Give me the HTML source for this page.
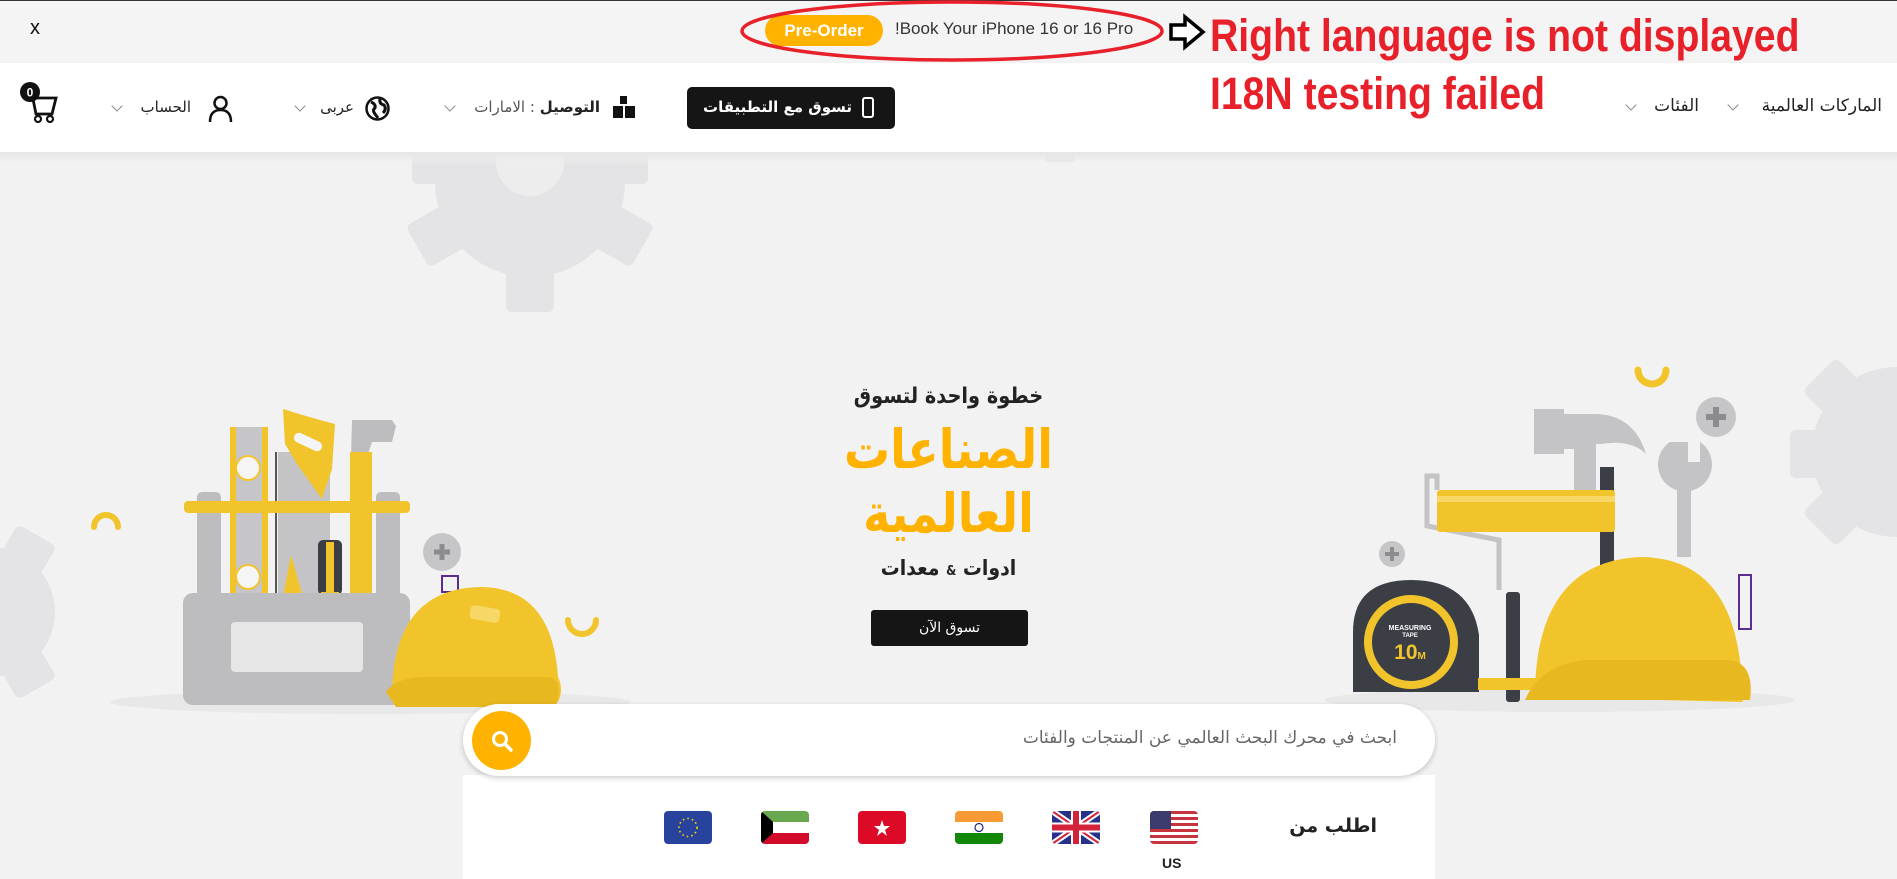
<!DOCTYPE html>
<html><head><meta charset="utf-8"><style>
*{margin:0;padding:0;box-sizing:border-box}
body{width:1897px;height:879px;overflow:hidden;background:#f2f2f2;font-family:"Liberation Sans","Noto Sans CJK SC",sans-serif;position:relative}
.a{position:absolute}
.ar{font-family:"DejaVu Sans","Noto Sans CJK SC",sans-serif;direction:rtl;white-space:nowrap}
.chev{position:absolute;width:8px;height:8px;border-right:1.5px solid #888;border-bottom:1.5px solid #888;transform:rotate(45deg)}
.flag{position:absolute;top:811px;width:48px;height:33px;border-radius:4px;overflow:hidden}
.c{left:0;width:1897px;text-align:center}
</style></head><body>
<div class="a" style="left:0;top:0;width:1897px;height:1px;background:#333"></div>
<div class="a" style="left:0;top:1px;width:1897px;height:62px;background:#f4f4f4"></div>
<div class="a" style="left:30px;top:17px;font-size:20px;color:#111">x</div>
<div class="a" style="left:765px;top:15px;width:118px;height:31px;border-radius:16px;background:#ffb300;color:#fff;font-weight:bold;font-size:17px;text-align:center;line-height:31px">Pre-Order</div>
<div class="a" style="left:895px;top:19px;font-size:17px;color:#333">!Book Your iPhone 16 or 16 Pro</div>
<svg class="a" style="left:0;top:0" width="1897" height="160">
<ellipse cx="952" cy="31" rx="210" ry="29" fill="none" stroke="#e8202a" stroke-width="3.5"/>
<path d="M1171 25 h14 v-8 l18 15 l-18 15 v-8 h-14 z" fill="#fff" stroke="#000" stroke-width="3.5"/>
</svg>
<div class="a" style="left:1210px;top:10px;font-size:45px;font-weight:bold;color:#e8202a;transform:scaleX(0.87);transform-origin:0 0;white-space:nowrap">Right language is not displayed</div>
<div class="a" style="left:0;top:63px;width:1897px;height:89px;background:#fff;box-shadow:0 3px 6px rgba(0,0,0,.08)"></div>
<div class="a" style="left:1210px;top:68px;font-size:45px;font-weight:bold;color:#e8202a;transform:scaleX(0.87);transform-origin:0 0;white-space:nowrap">I18N testing failed</div>
<!-- nav right -->
<div class="a ar" style="right:15px;top:96px;font-size:17px;color:#222">الماركات العالمية</div>
<div class="chev" style="left:1729px;top:101px"></div>
<div class="a ar" style="right:198px;top:96px;font-size:17px;color:#222">الفئات</div>
<div class="chev" style="left:1627px;top:101px"></div>
<!-- app button -->
<div class="a" style="left:687px;top:87px;width:208px;height:42px;background:#151515;border-radius:5px"></div>
<div class="a ar" style="right:1045px;top:98px;font-size:15px;font-weight:bold;color:#fff">تسوق مع التطبيقات</div>
<div class="a" style="left:862px;top:97px;width:12px;height:21px;border:2.5px solid #fff;border-radius:3px"></div>
<!-- delivery -->
<svg class="a" style="left:612px;top:96px" width="24" height="24"><rect x="8" y="0" width="7" height="8" fill="#111"/><rect x="1" y="10" width="10" height="12" fill="#111"/><rect x="13" y="10" width="10" height="12" fill="#111"/></svg>
<div class="a ar" style="right:1297px;top:98px;font-size:15px;color:#555"><b style="color:#222">التوصيل</b> : الامارات</div>
<div class="chev" style="left:446px;top:102px"></div>
<svg class="a" style="left:365px;top:96px" width="25" height="25"><circle cx="12.5" cy="12.5" r="11" fill="none" stroke="#111" stroke-width="2.5"/><path d="M6 6 q5 2 4 6 q-3 2 0 6 l3 4 M15 3 q-1 5 4 6 q3 4 -1 8" fill="none" stroke="#111" stroke-width="3"/></svg>
<div class="a ar" style="right:1543px;top:98px;font-size:15px;color:#222">عربى</div>
<div class="chev" style="left:296px;top:102px"></div>
<svg class="a" style="left:208px;top:95px" width="25" height="28"><circle cx="12.5" cy="8" r="6" fill="none" stroke="#111" stroke-width="2.5"/><path d="M2 27 q0-12 10.5-12 q10.5 0 10.5 12" fill="none" stroke="#111" stroke-width="2.5"/></svg>
<div class="a ar" style="right:1706px;top:98px;font-size:15px;color:#222">الحساب</div>
<div class="chev" style="left:113px;top:102px"></div>
<svg class="a" style="left:14px;top:80px" width="46" height="44"><path d="M14 14 h4 l4 20 h16 l4 -16 h-20" fill="none" stroke="#111" stroke-width="2.8"/><circle cx="24" cy="39" r="3" fill="none" stroke="#111" stroke-width="2.2"/><circle cx="36" cy="39" r="3" fill="none" stroke="#111" stroke-width="2.2"/><circle cx="16" cy="12" r="10" fill="#111"/><text x="16" y="16.5" font-size="12" font-weight="bold" fill="#fff" text-anchor="middle" font-family="Liberation Sans">0</text></svg>

<!-- hero illustrations -->
<svg class="a" style="left:0;top:152px" width="1897" height="727">
<defs><linearGradient id="sh" x1="0" y1="0" x2="0" y2="1"><stop offset="0" stop-color="#e6e6e6"/><stop offset="1" stop-color="#f2f2f2" stop-opacity="0"/></linearGradient></defs>
<g fill="#e4e4e6">
<circle cx="530" cy="30" r="95"/>
<rect x="506" y="-110" width="48" height="270" rx="6"/>
<rect x="506" y="-110" width="48" height="270" rx="6" transform="rotate(60 530 30)"/>
<rect x="506" y="-110" width="48" height="270" rx="6" transform="rotate(-60 530 30)"/>
<rect x="412" y="0" width="236" height="32" rx="5"/>
<rect x="1045" y="-10" width="30" height="20" rx="4"/>
<circle cx="1897" cy="300" r="85"/>
<rect x="1790" y="278" width="120" height="48" rx="6"/>
<rect x="1873" y="190" width="48" height="220" rx="6" transform="rotate(45 1897 300)"/>
<rect x="1873" y="190" width="48" height="220" rx="6" transform="rotate(-45 1897 300)"/>
<circle cx="-10" cy="460" r="65"/>
<rect x="-30" y="370" width="45" height="180" rx="6" transform="rotate(30 -10 460)"/>
<rect x="-30" y="370" width="45" height="180" rx="6" transform="rotate(-30 -10 460)"/>
</g>
<circle cx="530" cy="10" r="34" fill="#ededed"/>
<rect x="0" y="0" width="1897" height="14" fill="url(#sh)"/>
<ellipse cx="370" cy="550" rx="260" ry="12" fill="#e8e8e8"/>
<ellipse cx="1560" cy="548" rx="235" ry="12" fill="#e8e8e8"/>
<path d="M94 375 a12 12 0 0 1 24 0" fill="none" stroke="#f2c42c" stroke-width="6" stroke-linecap="round"/>
<path d="M568 468 a14 14 0 0 0 28 0" fill="none" stroke="#f2c42c" stroke-width="6" stroke-linecap="round"/>
<path d="M1638 218 a14 14 0 0 0 28 0" fill="none" stroke="#f2c42c" stroke-width="7" stroke-linecap="round"/>
<!-- toolbox left -->
<rect x="197" y="340" width="24" height="110" rx="5" fill="#bdbdbf"/>
<rect x="376" y="340" width="24" height="110" rx="5" fill="#bdbdbf"/>
<rect x="278" y="300" width="52" height="145" fill="#c4c4c6"/>
<rect x="275" y="300" width="2" height="145" fill="#555"/>
<path d="M283 257 q25 8 52 15 l-3 45 l-10 30 l-25 -35 l-12 -20 z" fill="#f2c42c"/>
<rect x="293" y="285" width="30" height="10" rx="5" fill="#f5f5f5" transform="rotate(25 308 290)"/>
<rect x="230" y="275" width="38" height="170" fill="#f2c42c"/><rect x="236" y="275" width="26" height="170" fill="#c6c6c8"/>
<circle cx="248" cy="316" r="12" fill="#f5f5f5" stroke="#f2c42c" stroke-width="2"/><circle cx="248" cy="425" r="12" fill="#f5f5f5" stroke="#f2c42c" stroke-width="2"/>
<path d="M352 268 h40 l4 6 l-4 16 h-20 l-5 15 h-16 z" fill="#bdbdbf"/>
<rect x="350" y="300" width="22" height="145" fill="#f2c42c"/>
<rect x="318" y="388" width="24" height="55" rx="5" fill="#3b3f45"/><rect x="326" y="390" width="8" height="50" fill="#f2c42c"/>
<rect x="321" y="440" width="18" height="15" fill="#f2c42c"/>
<path d="M283 445 l8 -42 l12 42 z" fill="#f2c42c"/>
<rect x="184" y="349" width="226" height="12" rx="4" fill="#f2c42c"/>
<rect x="183" y="441" width="227" height="112" rx="10" fill="#bdbdbf"/>
<rect x="231" y="470" width="132" height="50" rx="4" fill="#e6e6e6"/>
<circle cx="442" cy="400" r="19" fill="#c6c6c8"/><path d="M434 400 h16 M442 392 v16" stroke="#8c8c8e" stroke-width="5"/>
<rect x="442" y="424" width="16" height="16" fill="none" stroke="#5a2d91" stroke-width="2"/>
<path d="M392 545 q0 -108 88 -110 q72 0 78 90 q6 12 0 25 z" fill="#f2c42c"/>
<path d="M386 540 q10 -15 40 -15 h120 q15 0 12 20 l-2 10 h-160 z" fill="#e8b820"/>
<rect x="470" y="455" width="30" height="14" rx="4" fill="#f7d866" transform="rotate(10 485 462)"/>
<!-- right tools -->
<circle cx="1716" cy="265" r="20" fill="#c6c6c8"/><path d="M1706 265 h20 M1716 255 v20" stroke="#8c8c8e" stroke-width="6"/>
<circle cx="1392" cy="402" r="13" fill="#c6c6c8"/><path d="M1385 402 h14 M1392 395 v14" stroke="#8c8c8e" stroke-width="4"/>
<path d="M1534 257 h30 v5 h30 q40 0 52 40 q-15 -15 -45 -10 h-5 v80 h-22 v-75 h-10 v5 h-30 z" fill="#c4c4c6"/>
<path d="M1670 290 a27 27 0 1 0 30 0 v20 h-12 v-20 z" fill="#c4c4c6"/>
<rect x="1677" y="320" width="14" height="85" fill="#c4c4c6"/>
<rect x="1600" y="315" width="14" height="220" fill="#3b3f45"/>
<path d="M1437 338 v-14 h-10 v50 l72 14 v50" fill="none" stroke="#c4c4c6" stroke-width="5"/>
<rect x="1437" y="338" width="178" height="42" rx="3" fill="#f2c42c"/><rect x="1437" y="344" width="178" height="6" fill="#f7d866"/>
<rect x="1506" y="440" width="14" height="110" rx="3" fill="#3b3f45"/>
<path d="M1353 480 q0 -52 58 -52 q60 0 68 55 v57 h-126 z" fill="#3b3f45"/>
<circle cx="1411" cy="490" r="43" fill="none" stroke="#f2c42c" stroke-width="8"/>
<text x="1410" y="478" font-size="7" fill="#fff" text-anchor="middle" font-weight="bold" font-family="Liberation Sans">MEASURING</text>
<text x="1410" y="485" font-size="6" fill="#fff" text-anchor="middle" font-weight="bold" font-family="Liberation Sans">TAPE</text>
<text x="1410" y="507" font-size="21" fill="#f2c42c" text-anchor="middle" font-weight="bold" font-family="Liberation Sans">10<tspan font-size="10">M</tspan></text>
<rect x="1478" y="526" width="90" height="12" fill="#f2c42c"/>
<path d="M1535 545 q0 -135 105 -140 q95 0 102 125 q6 10 0 20 z" fill="#f2c42c"/>
<path d="M1525 548 q15 -35 60 -40 h140 q30 0 25 40 z" fill="#e8b820"/>
<rect x="1739" y="423" width="12" height="54" fill="none" stroke="#5a2d91" stroke-width="2"/>
</svg>

<!-- hero text -->
<div class="a ar c" style="top:384px;font-size:22px;font-weight:bold;color:#222;transform:scaleX(0.88)">خطوة واحدة لتسوق</div>
<div class="a ar c" style="top:418px;font-size:54px;line-height:64px;font-weight:bold;color:#ffb300;transform:scaleX(0.85)">الصناعات<br>العالمية</div>
<div class="a ar c" style="top:556px;font-size:21px;font-weight:bold;color:#222;transform:scaleX(0.9)">ادوات <span style="font-size:13px">&amp;</span> معدات</div>
<div class="a" style="left:871px;top:610px;width:157px;height:36px;background:#151515;border-radius:3px;color:#fff;font-size:14px;text-align:center;line-height:36px;font-family:'DejaVu Sans',sans-serif">تسوق الآن</div>

<!-- search -->
<div class="a" style="left:463px;top:775px;width:972px;height:104px;background:#fff"></div>
<div class="a" style="left:463px;top:704px;width:972px;height:72px;background:#fff;border-radius:36px;box-shadow:0 2px 6px rgba(0,0,0,.2)"></div>
<div class="a" style="left:472px;top:711px;width:59px;height:59px;background:#ffb300;border-radius:50%"></div>
<svg class="a" style="left:490px;top:729px" width="24" height="24"><circle cx="10" cy="10" r="6.5" fill="none" stroke="#fff" stroke-width="3"/><path d="M15 15 l6 6" stroke="#fff" stroke-width="3.5" stroke-linecap="round"/></svg>
<div class="a ar" style="right:500px;top:728px;font-size:17px;color:#666">ابحث في محرك البحث العالمي عن المنتجات والفئات</div>

<div class="a ar" style="right:520px;top:815px;font-size:19px;font-weight:bold;color:#222">اطلب من</div>
<div class="flag" style="left:1150px"><svg width="48" height="33"><rect width="48" height="33" fill="#fff"/><g fill="#c8343d"><rect y="0" width="48" height="3"/><rect y="6" width="48" height="3"/><rect y="12" width="48" height="3"/><rect y="18" width="48" height="3"/><rect y="24" width="48" height="3"/><rect y="30" width="48" height="3"/></g><rect width="21" height="18" fill="#3c3b6e"/></svg></div>
<div class="a" style="left:1162px;top:855px;font-size:14px;font-weight:bold;color:#222">US</div>
<div class="flag" style="left:1052px"><svg width="48" height="33"><rect width="48" height="33" fill="#27338a"/><path d="M0 0 L48 33 M48 0 L0 33" stroke="#fff" stroke-width="6"/><path d="M0 0 L48 33 M48 0 L0 33" stroke="#d2233a" stroke-width="2"/><path d="M24 0 V33 M0 16.5 H48" stroke="#fff" stroke-width="10"/><path d="M24 0 V33 M0 16.5 H48" stroke="#d2233a" stroke-width="6"/></svg></div>
<div class="flag" style="left:955px"><svg width="48" height="33"><rect width="48" height="11" fill="#f99a34"/><rect y="11" width="48" height="11" fill="#fff"/><rect y="22" width="48" height="11" fill="#138808"/><circle cx="24" cy="16.5" r="4" fill="none" stroke="#1e2a80" stroke-width="1.2"/></svg></div>
<div class="flag" style="left:858px"><svg width="48" height="33"><rect width="48" height="33" fill="#dc0a26"/><path d="M24 9 l2 6 l6 0 l-5 4 l2 6 l-5 -4 l-5 4 l2 -6 l-5 -4 l6 0 z" fill="#fff"/></svg></div>
<div class="flag" style="left:761px"><svg width="48" height="33"><rect width="48" height="11" fill="#6aa84f"/><rect y="11" width="48" height="11" fill="#fff"/><rect y="22" width="48" height="11" fill="#d20b2a"/><path d="M0 0 L12 11 V22 L0 33 Z" fill="#000"/></svg></div>
<div class="flag" style="left:664px"><svg width="48" height="33"><rect width="48" height="33" fill="#27439b"/><circle cx="24" cy="16.5" r="9" fill="none" stroke="#ffd200" stroke-width="1.6" stroke-dasharray="1.6 3"/></svg></div>
</body></html>
